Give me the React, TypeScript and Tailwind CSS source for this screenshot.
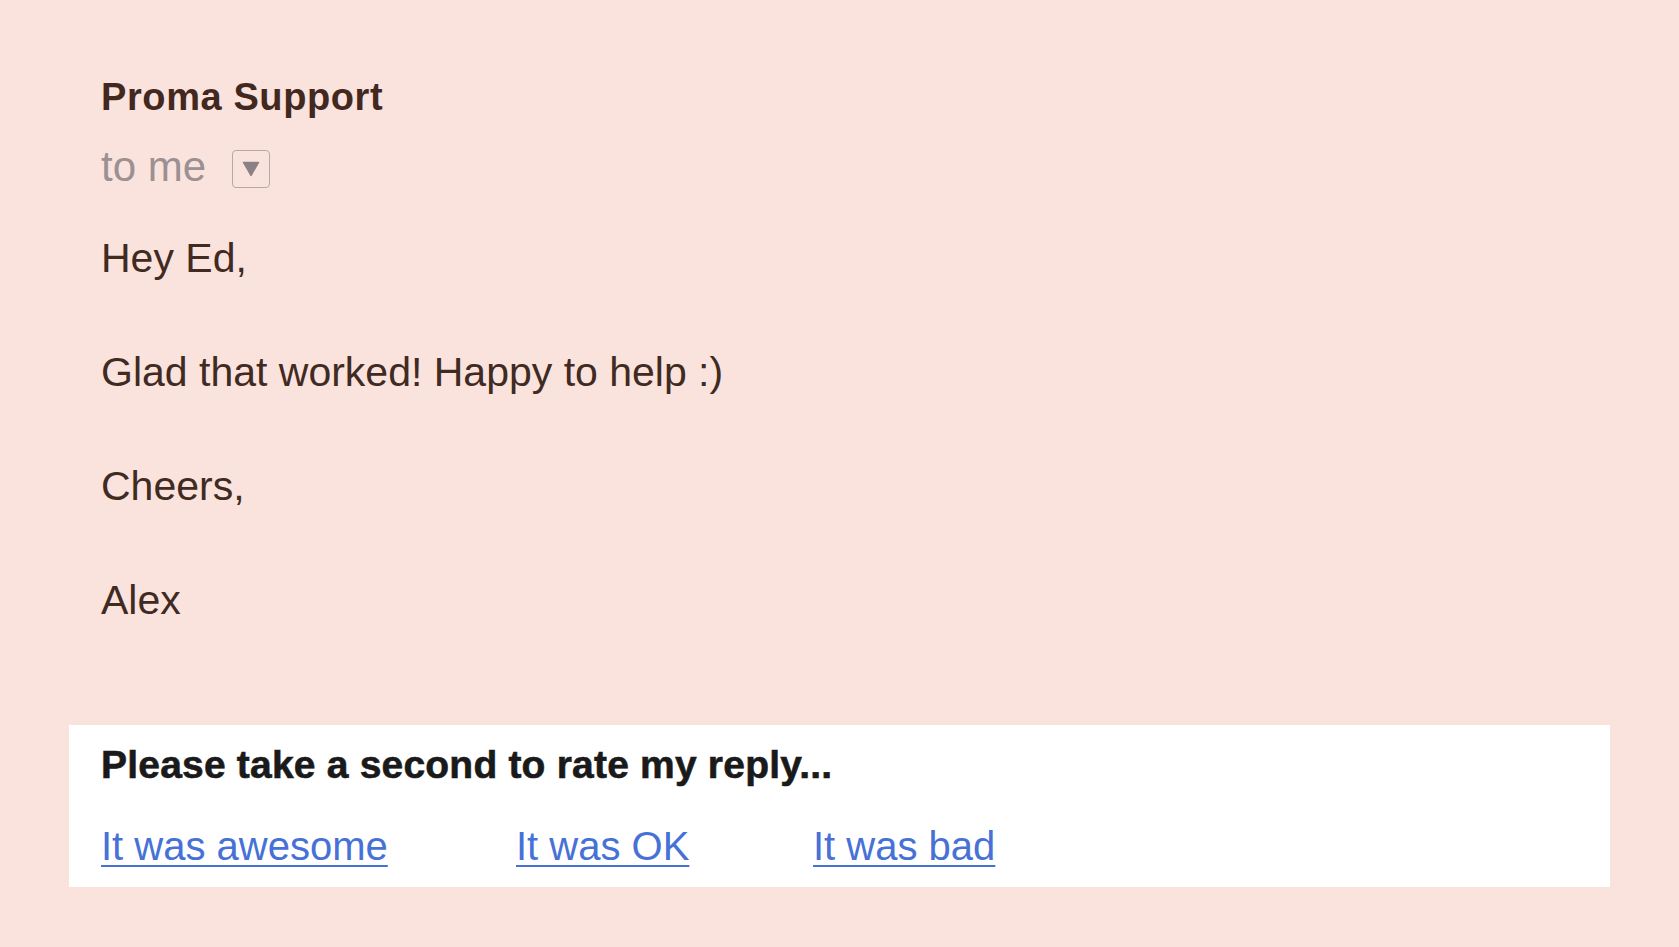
import React from "react";

export default function App() {
  const font = { fontFamily: '"Liberation Sans", Arial, sans-serif' };
  return (
    <div
      className="w-[1679px] h-[947px] bg-[#fae3dc] overflow-hidden px-[69px] pt-[75px]"
      style={font}
    >
      <div className="pl-[32px]">
        <div className="text-[38px] leading-[44px] font-bold text-[#42281f] tracking-[0.6px]">
          Proma Support
        </div>
        <div className="mt-[31px] flex items-start h-[38px]">
          <span className="text-[42px] leading-[33px] text-[#9c9093]">to me</span>
          <div className="ml-[26px] w-[38px] h-[38px] border border-[#b9a8a7] rounded-[4px] flex items-center justify-center">
            <svg width="18" height="16" viewBox="0 0 18 16">
              <path d="M1.5 1.5 L16.5 1.5 L9 14.5 Z" fill="#8b8083" stroke="#8b8083" strokeWidth="1.5" strokeLinejoin="round" />
            </svg>
          </div>
        </div>
        <div className="mt-[42px] text-[41px] leading-[57px] text-[#402a22] flex flex-col gap-[57px]">
          <p>Hey Ed,</p>
          <p>Glad that worked! Happy to help :)</p>
          <p>Cheers,</p>
          <p>Alex</p>
        </div>
      </div>
      <div className="mt-[96px] bg-white h-[162px] pl-[32px] pt-[17px]">
        <div className="text-[39px] leading-[46px] font-bold text-[#1a1a1a] tracking-[0.2px] [-webkit-text-stroke:0.6px_#1a1a1a]">
          Please take a second to rate my reply...
        </div>
        <div className="mt-[35px] flex text-[40px] leading-[46px] text-[#4771d6]">
          <div className="w-[415px]">
            <a href="#" className="underline decoration-2 underline-offset-[5px]">It was awesome</a>
          </div>
          <div className="w-[297px]">
            <a href="#" className="underline decoration-2 underline-offset-[5px]">It was OK</a>
          </div>
          <div>
            <a href="#" className="underline decoration-2 underline-offset-[5px]">It was bad</a>
          </div>
        </div>
      </div>
    </div>
  );
}
